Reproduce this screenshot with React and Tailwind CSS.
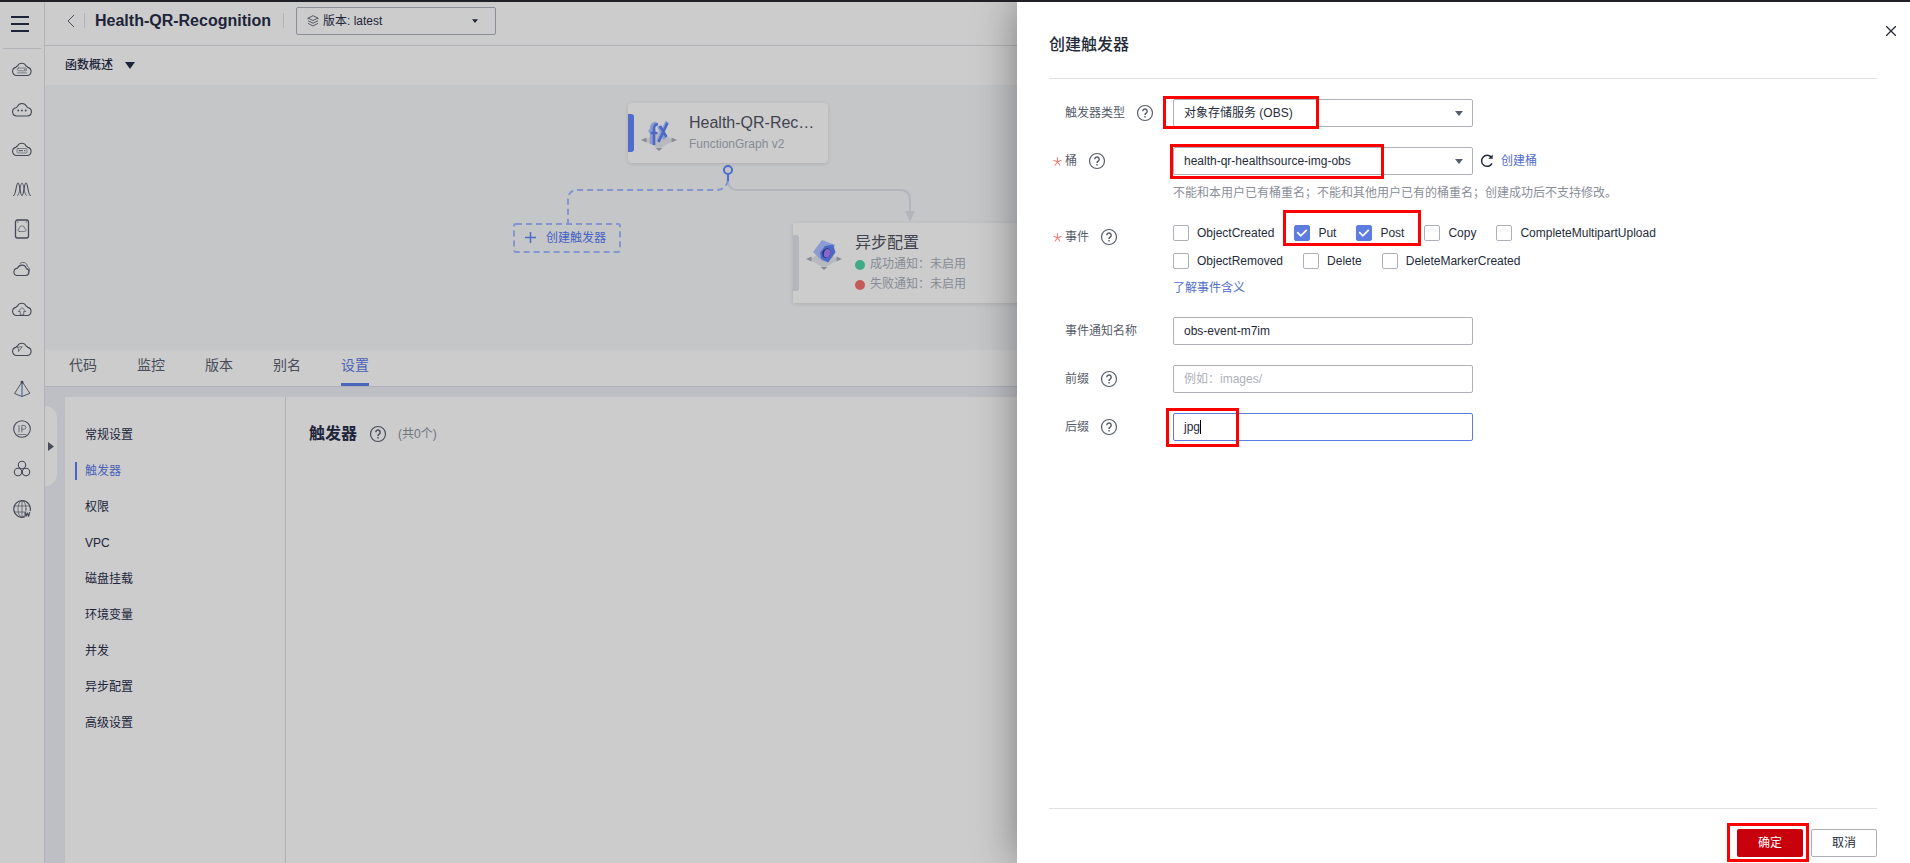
import React from 'react';

const CLOUD = 'M6 16.5h9.2a4.1 4.1 0 0 0 .6-8.1 2.6 2.6 0 0 0-1.7-1.3 4.7 4.7 0 0 0-8.6 0 2.6 2.6 0 0 0-1.7 1.3A4.1 4.1 0 0 0 4.6 16.5z';

function SideIcon({ children }) {
  return (
    <svg className="h-5 w-5 shrink-0" viewBox="0 0 20 20" fill="none" stroke="#454958" strokeWidth="1.1" strokeLinecap="round" strokeLinejoin="round">
      {children}
    </svg>
  );
}

const sideIcons = [
  <>
    <path d={CLOUD} />
    <rect x="5.5" y="9" width="9" height="2.8" rx="1" strokeWidth="0.6" />
    <path d="M5.5 13.900h9" strokeWidth="0.6" />
    <path d="M12.500 10.400h.5" strokeWidth="0.8" />
  </>,
  <>
    <path d="M4.6 17h10.8a4.2 4.2 0 0 0 .7-8.300c-.5-.2-1-.3-1.500-1.200a5 5 0 0 0-9.200 0c-.5.9-1 1-1.500 1.200A4.200 4.200 0 0 0 4.600 17z" />
    <path d="M6.200 11.500h.1M9.900 11.500h.1M13.600 11.500h.1" strokeWidth="1.800" />
  </>,
  <>
    <path d={CLOUD} />
    <rect x="5" y="9.500" width="10" height="4.500" rx="1" strokeWidth="0.600" />
    <path d="M7 11.700h3.500M12.500 11.700h.5" strokeWidth="1" />
  </>,
  <>
    <path d="M1.500 16.500C4 16.500 4 4 6 4s2 12.500 4 12.500S12 4 14 4s2 12.500 4.500 12.500" />
    <path d="M5.500 16.500C8 16.500 8 4 10 4s2 12.500 4.500 12.500" strokeWidth="0.800" />
  </>,
  <>
    <rect x="3.500" y="1" width="13" height="18" rx="2" strokeWidth="1.300" />
    <path d="M7.500 12.500h5a1.500 1.500 0 0 0 .2-3 2.700 2.700 0 0 0-5.400 0 1.500 1.500 0 0 0 .2 3z" strokeWidth="0.600" />
    <path d="M5.500 3h.6M14 3h.6" strokeWidth="0.800" />
  </>,
  <>
    <path d="M4.500 16.500h9a3.500 3.500 0 0 0 .8-6.900 4.500 4.500 0 0 0-8.600-.5 3.800 3.800 0 0 0-1.200 7.400z" />
    <path d="M8 4.500a4.500 4.500 0 0 1 7.500 3 3.500 3.500 0 0 1 .8 6" strokeWidth="0.700" />
  </>,
  <>
    <path d={CLOUD} />
    <path d="M8.300 15.500v-3H6.200L10 8.500l3.800 4h-2.100v3z" strokeWidth="0.700" />
  </>,
  <>
    <path d={CLOUD} />
    <path d="M10 8 6.500 12.500V9.800L5.200 8.600z" strokeWidth="0.700" />
  </>,
  <>
    <path d="M10 3 2.500 14.500 10 17.500l7.500-3z" strokeWidth="0.900" />
    <path d="M10 3v14" stroke="#3f6097" />
    <circle cx="10" cy="3.300" r="0.900" fill="#22263a" />
  </>,
  <>
    <circle cx="10" cy="10" r="8.300" />
    <path d="M7 6.500v6.500M9.800 13V6.500H12a1.800 1.800 0 0 1 0 3.700H9.800" strokeWidth="0.700" />
    <path d="M6 15.500h8" strokeWidth="0.600" />
  </>,
  <>
    <circle cx="10" cy="6" r="3.700" />
    <circle cx="6" cy="13" r="3.700" />
    <circle cx="14" cy="13" r="3.700" />
  </>,
  <>
    <path d="M12.500 17.900a8.300 8.300 0 1 1 5.700-6.200" strokeWidth="1.200" />
    <ellipse cx="10" cy="10" rx="4" ry="8.300" strokeWidth="0.700" />
    <path d="M10 2v16M2.500 7h15M2.500 13h10" strokeWidth="0.700" />
    <path d="m13 13.500 1 3.800 1.300-3.300 1.300 3.300 1-3.800" strokeWidth="1.200" />
  </>,
];

function Help({ color = '#575d6c' }) {
  return (
    <svg className="h-[18px] w-[18px] shrink-0" viewBox="0 0 18 18" fill="none" stroke={color} strokeWidth="1.2">
      <circle cx="9" cy="9" r="7.500" />
      <path d="M6.800 7.300a2.200 2.200 0 1 1 3.500 1.700c-.8.6-1.300.9-1.300 1.900" strokeWidth="1.400" />
      <path d="M9 12v1.400" strokeWidth="1.400" />
    </svg>
  );
}

function Caret({ className = 'h-[5px] w-[8px]' }) {
  return (
    <svg className={`shrink-0 ${className}`} viewBox="0 0 8 5">
      <path d="M0 0h8L4 5z" fill="currentColor" />
    </svg>
  );
}

function Platform() {
  return (
    <>
      <path d="M18 15 33 23.500 18 32 3 23.500z" fill="#b6b9be" />
      <path d="m0 23 5.500-2.500v5zM36 23l-5.500-2.500v5zM14.500 31l3.500 3 3.500-3z" fill="#888c94" />
    </>
  );
}

function FnCard() {
  return (
    <div className="absolute left-[583px] top-[18px] flex h-[60px] w-[200px] items-center rounded-[4px] bg-[#ccc] shadow-[0_1px_4px_rgba(0,0,0,0.12)]">
      <span className="h-[38px] w-[6px] rounded-r-[3px] bg-[#4f6ccc]" />
      <svg className="ml-[7px] mt-1 h-9 w-9 shrink-0" viewBox="0 0 36 36" fill="none">
        <Platform />
        <path d="M15.500 6.500c-3.500-.5-5 1.500-5 5V27M7.500 14h7M17.500 9l6 13M26 4.500 17 24" stroke="#8c9cd2" strokeWidth="3.200" />
        <path d="M17 7.500c-3-.5-4 1.500-4 4.500v16M9.500 16h7M19 9l6.500 11M26.500 6 17.500 25" stroke="#4c68c4" strokeWidth="2.600" />
      </svg>
      <div className="ml-[12px]">
        <div className="text-[16px] leading-[22px] text-[#41444f]">Health-QR-Rec…</div>
        <div className="text-[12px] leading-5 text-[#868b95]">FunctionGraph v2</div>
      </div>
    </div>
  );
}

function AsyncCard() {
  return (
    <div className="absolute left-[748px] top-[138px] flex h-[80px] w-[240px] bg-[#ccc] shadow-[0_1px_4px_rgba(0,0,0,0.12)]">
      <span className="mt-3 h-[56px] w-[6px] rounded-r-[3px] bg-[#b4b6bc]" />
      <svg className="ml-[7px] mt-[13px] h-9 w-9 shrink-0" viewBox="0 0 36 36">
        <Platform />
        <path d="m16 4 13 5-6 17-7-1-9-9z" fill="#8c9cd2" />
        <path d="m19 10 8-1.500 2.500 8-7.500 10-7-4-1-6z" fill="#4c68c4" />
        <ellipse cx="20.500" cy="17" rx="4" ry="5" fill="#252d70" transform="rotate(20 20 17)" />
        <ellipse cx="21.200" cy="17" rx="3.200" ry="4.400" fill="#8666cc" transform="rotate(20 20 17)" />
      </svg>
      <div className="ml-[13px] pt-[9px]">
        <div className="text-[16px] leading-[22px] text-[#41444f]">异步配置</div>
        <div className="flex h-5 items-center gap-[5px] text-[12px] text-[#868b95]">
          <i className="mt-px h-[10px] w-[10px] rounded-full bg-[#40aa87]" />
          成功通知：未启用
        </div>
        <div className="flex h-5 items-center gap-[5px] text-[12px] text-[#868b95]">
          <i className="mt-px h-[10px] w-[10px] rounded-full bg-[#c45b58]" />
          失败通知：未启用
        </div>
      </div>
    </div>
  );
}

function Canvas() {
  return (
    <div className="relative h-[265px] shrink-0 overflow-hidden bg-[#c4c6c8]">
      <svg className="absolute left-[455px] top-[75px] h-[100px] w-[420px]" viewBox="500 160 420 100" fill="none" strokeWidth="2">
        <path d="M728 180q0 10 10 10H900q10 0 10 10v12" stroke="#b2b5bc" />
        <path d="M905 211h10l-5 11z" fill="#b2b5bc" />
        <path d="M728 180q-2 10-12 10H578q-10 0-10 10v23" stroke="#8496cf" strokeDasharray="6 4" />
        <path d="M728 174v7" stroke="#4f6ccc" />
        <circle cx="728" cy="170" r="4" stroke="#4f6ccc" />
        <rect x="514" y="224" width="106" height="28" rx="2" stroke="#8496cf" strokeDasharray="6 4" />
        <path d="M525 237.500h11M530.500 232v11" stroke="#4f6ccc" strokeWidth="1.500" />
      </svg>
      <FnCard />
      <AsyncCard />
      <span className="absolute left-[501px] top-[143px] text-[12px] leading-5 text-[#4462c4]">创建触发器</span>
    </div>
  );
}

const tabs = ['代码', '监控', '版本', '别名', '设置'];
const navItems = ['常规设置', '触发器', '权限', 'VPC', '磁盘挂载', '环境变量', '并发', '异步配置', '高级设置'];

function Page() {
  return (
    <div className="relative flex w-[972px] shrink-0 flex-col overflow-hidden bg-[#ccc]">
      <header className="flex h-[44px] shrink-0 items-center border-b border-[#b2b3b8] pb-[6px]">
        <svg className="ml-[22px] h-[14px] w-[8px]" viewBox="0 0 8 14" fill="none" stroke="#494d59">
          <path d="M7 1 1 7l6 6" />
        </svg>
        <span className="ml-[9px] h-[15px] w-px bg-[#b2b3b8]" />
        <h1 className="ml-[10px] whitespace-nowrap text-[16px] font-bold text-[#20243a]">Health-QR-Recognition</h1>
        <span className="ml-[12px] h-[15px] w-px bg-[#b2b3b8]" />
        <div className="ml-[12px] flex h-[28px] w-[200px] items-center rounded-[2px] border border-[#8a8e99] pl-[10px] pr-[17px] text-[12px] text-[#20243a]">
          <svg className="mr-[4px] h-3 w-3" viewBox="0 0 12 12" fill="none" stroke="#494d59" strokeWidth="0.900">
            <path d="m6 .7 5 2.400-5 2.400-5-2.400zM1 5.700l5 2.500 5-2.500M1 8.300l5 2.700 5-2.700M1 3.100v1M11 3.100v1" />
          </svg>
          <span className="flex-1">版本: latest</span>
          <Caret className="h-[4px] w-[6px]" />
        </div>
      </header>
      <div className="flex h-[39px] shrink-0 items-center pb-px pl-[20px] text-[12px] font-medium text-[#20243a]">
        函数概述
        <svg className="ml-[12px] mt-px h-[7px] w-[10px]" viewBox="0 0 10 7"><path d="M0 0h10L5 7z" fill="#20243a" /></svg>
      </div>
      <Canvas />
      <nav className="flex h-[37px] shrink-0 gap-[40px] border-b border-[#b0b1b8] pl-[24px] text-[14px]">
        {tabs.map((t) => (
          <span key={t} className={`border-b-[3px] pt-[4px] leading-[22px] ${t === '设置' ? 'border-[#4a66ba] text-[#4a62b8]' : 'border-transparent text-[#494d59]'}`}>{t}</span>
        ))}
      </nav>
      <div className="flex flex-1 bg-[#bebfc4] pl-[20px] pt-[10px]">
        <ul className="flex w-[221px] flex-col border-r border-[#b0b1b5] bg-[#ccc] pl-[10px] pt-[20px] text-[12px] text-[#20243a]">
          {navItems.map((n) => (
            <li key={n} className="flex h-[36px] items-center">
              <span className={`h-[18px] w-[2px] ${n === '触发器' ? 'bg-[#4a66ca]' : ''}`} />
              <span className={`ml-[8px] ${n === '触发器' ? 'text-[#4a62b8]' : ''}`}>{n}</span>
            </li>
          ))}
        </ul>
        <section className="flex flex-1 bg-[#ccc] pl-[23px] pt-[24px]">
          <div className="flex h-[26px] items-center">
            <h2 className="text-[16px] font-bold text-[#20243a]">触发器</h2>
            <span className="ml-[12px]"><Help color="#494d59" /></span>
            <span className="ml-[11px] text-[12px] text-[#70747f]">(共0个)</span>
          </div>
        </section>
      </div>
      <div className="absolute left-0 top-[404px] flex h-[80px] w-[12px] items-center rounded-r-[12px] bg-[#ccc] pl-[3px]">
        <svg className="h-[9px] w-[6px]" viewBox="0 0 6 9"><path d="M0 0l6 4.500L0 9z" fill="#494d59" /></svg>
      </div>
    </div>
  );
}

function Row({ label, help, required, className = '', children }) {
  return (
    <div className={`flex items-start ${className}`}>
      <div className="flex h-[28px] w-[124px] shrink-0 items-center text-[12px] text-[#575d6c]">
        <span className="w-[16px] shrink-0 pl-[4px]">
          {required && (
            <svg className="h-[9px] w-[9px]" viewBox="0 0 9 9" fill="none" stroke="#f77c76" strokeWidth="1.1">
              <path d="M4.500 4.700V.3M4.500 4.700.4 3.300M4.500 4.700l4.100-1.400M4.500 4.700 1.900 8.500M4.500 4.700l2.600 3.800" />
            </svg>
          )}
        </span>
        <span className="mr-[11px] whitespace-nowrap">{label}</span>
        {help && <Help />}
      </div>
      {children}
    </div>
  );
}

function Field({ children, select, focus, muted }) {
  return (
    <div className={`flex h-[28px] w-[300px] shrink-0 items-center rounded-[2px] border pl-[10px] pr-[9px] text-[12px] ${focus ? 'border-[#5e7ce0]' : 'border-[#adb0b8]'} ${muted ? 'text-[#adb0b8]' : 'text-[#252b3a]'}`}>
      <span className="flex flex-1 items-center pb-px">{children}</span>
      {select && <Caret className="h-[5px] w-[8px] text-[#575d6c]" />}
    </div>
  );
}

function Check({ label, checked }) {
  return (
    <div className="flex items-center gap-[8px]">
      <span className={`flex h-4 w-4 items-center justify-center rounded-[2px] border ${checked ? 'border-[#5e7ce0] bg-[#5e7ce0]' : 'border-[#adb0b8] bg-white'}`}>
        {checked && (
          <svg className="h-3 w-3 shrink-0" viewBox="0 0 12 12" fill="none" stroke="#fff" strokeWidth="1.800"><path d="m1.200 5.200 3.600 3.600 6-6" /></svg>
        )}
      </span>
      <span className="pb-px">{label}</span>
    </div>
  );
}

function Drawer() {
  return (
    <aside className="relative flex flex-1 flex-col bg-white pl-[32px] pr-[33px] shadow-[0_0_40px_rgba(0,0,0,0.4)]">
      <header className="flex h-[77px] shrink-0 items-center border-b border-[#dfe1e6] pt-[10px] text-[16px] font-medium text-[#252b3a]">创建触发器</header>
      <svg className="absolute right-[14px] top-[24px] h-[10px] w-[10px]" viewBox="0 0 10 10" stroke="#252b3a" strokeWidth="1.300"><path d="m0 0 10 10M10 0 0 10" /></svg>
      <div className="flex flex-1 flex-col pt-[20px]">
        <Row label="触发器类型" help><Field select>对象存储服务 (OBS)</Field></Row>
        <Row label="桶" help required className="mt-[20px]">
          <div>
            <div className="flex items-center">
              <Field select>health-qr-healthsource-img-obs</Field>
              <svg className="ml-[7px] h-[14px] w-[14px]" viewBox="0 0 14 14" fill="none" stroke="#252b3a" strokeWidth="1.500">
                <path d="M12 9.300A5.500 5.500 0 1 1 11.300 3.300" />
                <path d="M8.300 4.700H12.700V.5z" fill="#252b3a" stroke="none" />
              </svg>
              <span className="ml-[7px] text-[12px] text-[#526ecc]">创建桶</span>
            </div>
            <div className="mt-[8px] text-[12px] leading-5 text-[#8a8e99]">不能和本用户已有桶重名；不能和其他用户已有的桶重名；创建成功后不支持修改。</div>
          </div>
        </Row>
        <Row label="事件" help required className="mt-[20px]">
          <div className="text-[12px] text-[#252b3a]">
            <div className="mt-[2px] flex h-4 gap-[20px]">
              <Check label="ObjectCreated" />
              <Check label="Put" checked />
              <Check label="Post" checked />
              <Check label="Copy" />
              <Check label="CompleteMultipartUpload" />
            </div>
            <div className="mt-[12px] flex h-4 gap-[20px]">
              <Check label="ObjectRemoved" />
              <Check label="Delete" />
              <Check label="DeleteMarkerCreated" />
            </div>
            <div className="mt-[9px] h-[19px] leading-5 text-[#526ecc]">了解事件含义</div>
          </div>
        </Row>
        <Row label="事件通知名称" className="mt-[20px]"><Field>obs-event-m7im</Field></Row>
        <Row label="前缀" help className="mt-[20px]"><Field muted>例如：images/</Field></Row>
        <Row label="后缀" help className="mt-[20px]">
          <Field focus>jpg<i className="h-[14px] w-px bg-black" /></Field>
        </Row>
      </div>
      <footer className="flex h-[55px] shrink-0 justify-end gap-[8px] border-t border-[#dfe1e6] pt-[20px] text-[12px]">
        <button className="h-[28px] w-[66px] rounded-[2px] bg-[#c7000b] text-white">确定</button>
        <button className="h-[28px] w-[66px] rounded-[2px] border border-[#adb0b8] text-[#252b3a]">取消</button>
      </footer>
      <Mark className="left-[146px] top-[94px] h-[33px] w-[156px]" />
      <Mark className="left-[153px] top-[142px] h-[35px] w-[214px]" />
      <Mark className="left-[266px] top-[208px] h-[36px] w-[138px]" />
      <Mark className="left-[149px] top-[406px] h-[39px] w-[73px]" />
      <Mark className="left-[710px] top-[821px] h-[39px] w-[82px]" />
    </aside>
  );
}

function Mark({ className }) {
  return <span className={`pointer-events-none absolute border-[3px] border-[#ff0000] ${className}`} />;
}

export default function App() {
  return (
    <div className="flex h-[863px] w-[1910px] overflow-hidden border-t-2 border-[#1f2028] bg-[#ccc] font-['Liberation_Sans','Noto_Sans_CJK_SC',sans-serif]">
      <aside className="flex w-[45px] shrink-0 flex-col border-r border-[#b2b3b8]">
        <div className="mx-[3px] flex h-[47px] flex-col gap-[5px] border-b border-[#b2b3b8] pl-[8px] pt-[14px]">
          <span className="h-[2px] w-[18px] bg-[#20243a]" />
          <span className="h-[2px] w-[18px] bg-[#20243a]" />
          <span className="h-[2px] w-[18px] bg-[#20243a]" />
        </div>
        <div className="flex flex-col items-center gap-[20px] pt-[10px]">
          {sideIcons.map((ic, i) => <SideIcon key={i}>{ic}</SideIcon>)}
        </div>
      </aside>
      <Page />
      <Drawer />
    </div>
  );
}
